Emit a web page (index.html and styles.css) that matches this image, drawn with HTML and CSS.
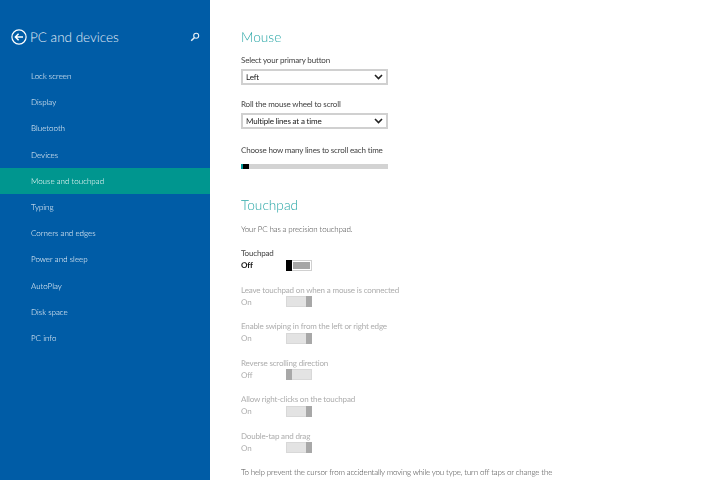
FILE: index.html
```html
<!DOCTYPE html>
<html lang="en">
<head>
<meta charset="utf-8">
<title>PC and devices</title>
<link rel="stylesheet" href="styles.css">
</head>
<body>
<div class="app">
  <nav class="side">
    <header class="side-head">
      <svg class="back" width="16" height="16" viewBox="0 0 16 16" aria-hidden="true">
        <circle cx="8" cy="8" r="7.1" fill="none" stroke="#fff" stroke-width="1.2"/>
        <path d="M12 8H4.800M7.600 4.800L4.400 8l3.200 3.200" fill="none" stroke="#fff" stroke-width="1.500"/>
      </svg>
      <h1 class="side-title">PC and devices</h1>
      <svg class="search" width="10" height="10" viewBox="0 0 10 10" aria-hidden="true">
        <circle cx="6.200" cy="3.800" r="2.500" fill="none" stroke="#e8f0f6" stroke-width="1.100"/>
        <path d="M4.300 5.700L1.200 8.800" fill="none" stroke="#e8f0f6" stroke-width="1.500"/>
      </svg>
    </header>
    <ul class="menu">
      <li class="item">Lock screen</li>
      <li class="item">Display</li>
      <li class="item">Bluetooth</li>
      <li class="item">Devices</li>
      <li class="item selected">Mouse and touchpad</li>
      <li class="item">Typing</li>
      <li class="item">Corners and edges</li>
      <li class="item">Power and sleep</li>
      <li class="item">AutoPlay</li>
      <li class="item">Disk space</li>
      <li class="item">PC info</li>
    </ul>
  </nav>
  <main class="main">
    <h2 class="section first">Mouse</h2>
    <div class="label">Select your primary button</div>
    <div class="select"><span>Left</span><svg class="chev" width="9" height="6" viewBox="0 0 9 6"><path d="M1 1l3.500 3.500L8 1" fill="none" stroke="#222" stroke-width="1.600"/></svg></div>
    <div class="label gap">Roll the mouse wheel to scroll</div>
    <div class="select"><span>Multiple lines at a time</span><svg class="chev" width="9" height="6" viewBox="0 0 9 6"><path d="M1 1l3.500 3.500L8 1" fill="none" stroke="#222" stroke-width="1.600"/></svg></div>
    <div class="label gap-wide">Choose how many lines to scroll each time</div>
    <div class="slider"><span class="fill"></span><span class="thumb"></span></div>

    <h2 class="section second">Touchpad</h2>
    <p class="text">Your PC has a precision touchpad.</p>

    <div class="setting top">
      <div class="label">Touchpad</div>
      <div class="row"><span class="state strong">Off</span><span class="toggle active off"><span class="knob"></span></span></div>
    </div>
    <div class="setting dim">
      <div class="label">Leave touchpad on when a mouse is connected</div>
      <div class="row"><span class="state">On</span><span class="toggle on"><span class="knob"></span></span></div>
    </div>
    <div class="setting dim">
      <div class="label">Enable swiping in from the left or right edge</div>
      <div class="row"><span class="state">On</span><span class="toggle on"><span class="knob"></span></span></div>
    </div>
    <div class="setting dim">
      <div class="label">Reverse scrolling direction</div>
      <div class="row"><span class="state">Off</span><span class="toggle off"><span class="knob"></span></span></div>
    </div>
    <div class="setting dim">
      <div class="label">Allow right-clicks on the touchpad</div>
      <div class="row"><span class="state">On</span><span class="toggle on"><span class="knob"></span></span></div>
    </div>
    <div class="setting dim">
      <div class="label">Double-tap and drag</div>
      <div class="row"><span class="state">On</span><span class="toggle on"><span class="knob"></span></span></div>
    </div>
    <p class="text note">To help prevent the cursor from accidentally moving while you type, turn off taps or change the delay before taps work.</p>
  </main>
</div>
</body>
</html>
```

FILE: styles.css
```css
* { box-sizing: border-box; }
html, body { margin: 0; padding: 0; height: 100%; overflow: hidden; background: #fff; }
body { font-family: Lato, "Open Sans", sans-serif; font-size: 8px; color: #444; text-rendering: geometricPrecision; }
h1, h2, p, ul { margin: 0; padding: 0; font-weight: 300; }
.app { display: flex; width: 720px; height: 480px; filter: blur(0.3px); }
.side { width: 210px; height: 480px; flex: none; background: #005ca6; color: #fff; }
.side-head { display: flex; align-items: center; height: 63px; padding: 11px 10px 0 10px; }
.back { flex: none; margin-left: 0.5px; }
.side-title { font-size: 13.5px; line-height: 20px; margin-left: 3.5px; flex: 1; color: #e4eef6; }
.search { flex: none; margin-top: -1px; }
.menu { list-style: none; }
.item { height: 26.2px; line-height: 26.2px; padding-left: 31px; color: #fff; }
.selected { background: #00968f; }
.main { flex: 1; height: 480px; overflow: hidden; padding: 0 0 0 31px; width: 510px; letter-spacing: -0.17px; }
.section { color: #28a6a6; font-size: 13.7px; line-height: 20px; letter-spacing: 0; }
.first { margin-top: 27px; }
.second { margin-top: 26px; }
.label { line-height: 12px; color: #444; }
.first + .label { margin-top: 7px; }
.gap { margin-top: 13px; }
.gap-wide { margin-top: 15px; }
.select { display: flex; align-items: center; justify-content: space-between; width: 147px; height: 16px; margin-top: 3px; padding: 0 3px; border: 2px solid #d0d0d0; background: #fff; color: #222; }
.slider { display: flex; width: 147px; height: 5px; margin-top: 8px; background: #d3d3d3; }
.fill { width: 2px; background: #009a9a; }
.thumb { width: 6px; background: #000; }
.text { color: #444; line-height: 12px; }
.second + .text { margin-top: 8px; }
.setting { margin-top: 12.6px; }
.setting.top { margin-top: 12px; }
.row { display: flex; align-items: center; height: 12px; }
.state { width: 45px; line-height: 12px; }
.strong { font-weight: 700; color: #111; }
.toggle { display: flex; width: 26px; height: 11px; padding: 0; border: 1px solid #d8d8d8; background: #e3e3e3; }
.on { justify-content: flex-end; }
.knob { width: 6px; margin: -1px; background: #a8a8a8; }
.dim .label, .dim .state { color: #adadad; }
.toggle.active { background: #fff; border-color: #d0d0d0; padding: 1px 1px 1px 0; }
.toggle.active::after { content: ""; flex: 1; margin-left: 1px; background: #a6a6a6; }
.active .knob { background: #000; margin: -2px 0 -2px -1px; }
.note { margin-top: 12px; width: 330px; }
```
